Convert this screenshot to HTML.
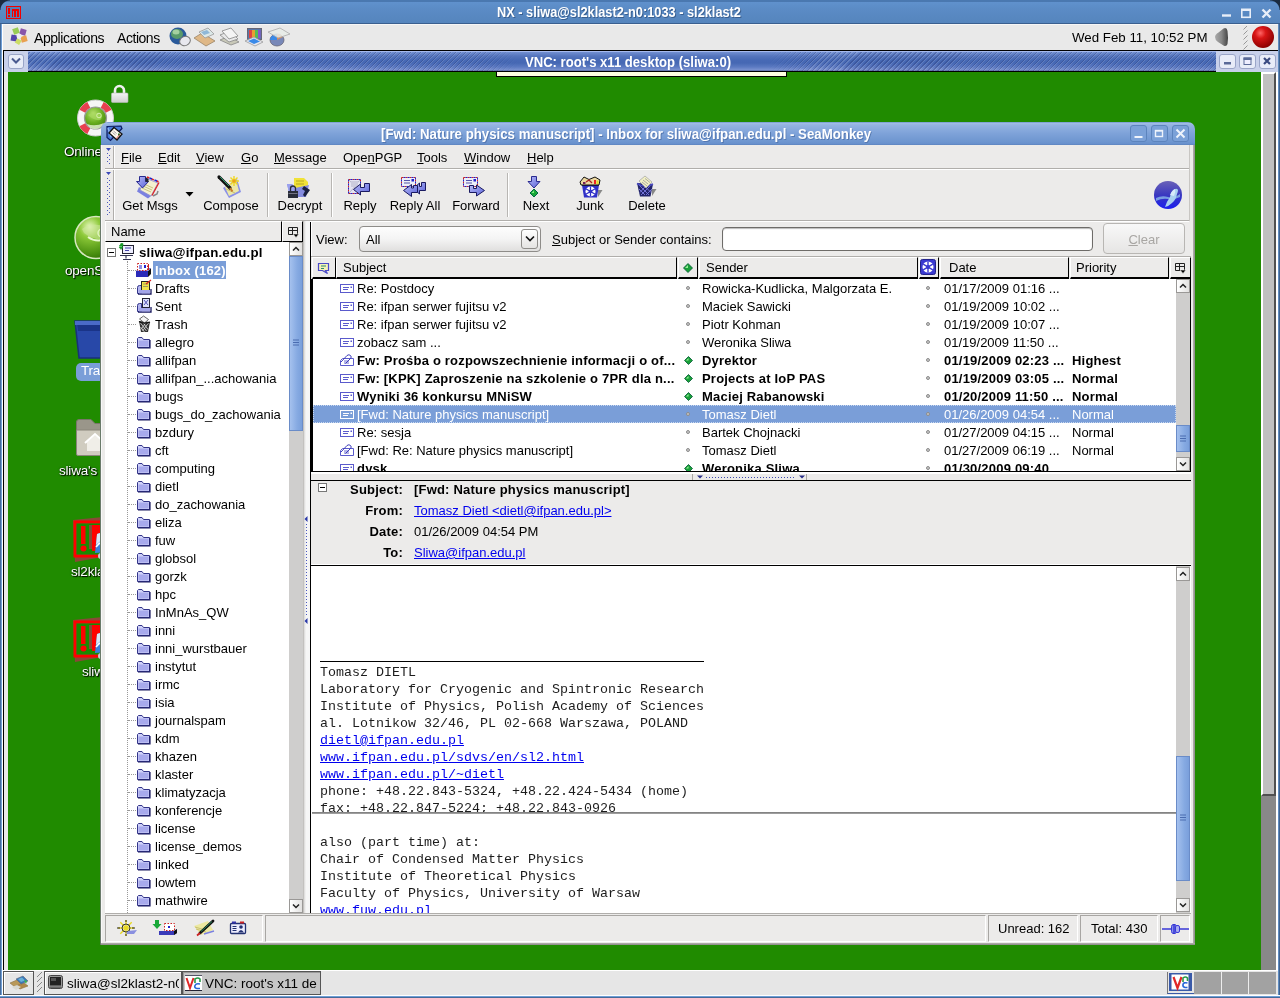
<!DOCTYPE html>
<html><head><meta charset="utf-8">
<style>
*{box-sizing:border-box;margin:0;padding:0}
html,body{width:1280px;height:998px;overflow:hidden;background:#208b00}
body{font-family:"Liberation Sans",sans-serif;font-size:13px;color:#000;position:relative;will-change:transform}
.a{position:absolute}
.t{position:absolute;white-space:pre;line-height:16px;height:16px}
u{text-decoration:underline}
/* outer NX frame */
#nxtitle{left:0;top:0;width:1280px;height:24px;background:linear-gradient(#6193cf,#5b8bc5 40%,#5585bd);border-bottom:1px solid #3a5f8f}
#panel{left:3px;top:24px;width:1275px;height:26px;background:#e9e9e9;border-top:1px solid #f6f6f6}
#vnctitle{left:28px;top:51px;width:1188px;height:20px;background:repeating-linear-gradient(135deg,rgba(0,0,0,0) 0,rgba(0,0,0,0) 2px,rgba(20,30,90,.24) 2px,rgba(20,30,90,.24) 2.800px,rgba(255,255,255,.14) 2.800px,rgba(255,255,255,.14) 3.540px),linear-gradient(#a6baee 0,#a6baee 1px,#6e8ccf 1.500px,#5575bd 5px,#4769b5 9px,#4668b4 12px,#5c7ac2 16px,#7a92d0 19px,#505a90 20px)}
#desk{left:8px;top:72px;width:1253px;height:898px;background:#208b00}
#bpanel{left:3px;top:970px;width:1275px;height:25px;background:#e6e6e6;border-top:1px solid #fff}
/* seamonkey */
#sm{left:101px;top:130px;width:1093px;height:815px;background:#ecebea}
.mn{top:150px}
.tbl{top:198px;text-align:center}
.row{position:absolute;left:0;height:18px;line-height:20px;white-space:pre}
.fold{position:absolute;left:155px;height:18px;line-height:20px;white-space:pre}
.b{font-weight:bold;letter-spacing:.2px}
.mono{font-family:"Liberation Mono",monospace;font-size:13.33px;line-height:19px;color:#1c1c1c;white-space:pre;position:absolute;left:320px;height:17px}
.lnk{color:#0000ee;text-decoration:underline}
</style></head><body>
<!-- ===== NX outer window ===== -->
<div class="a" id="nxtitle"></div>
<div class="a" style="left:0;top:0;width:1280px;height:2px;background:#4a78b0"></div>
<div class="a" style="left:0;top:0;width:10px;height:10px;background:radial-gradient(circle at 10px 10px,transparent 9px,#1a2a40 10px)"></div>
<div class="a" style="left:1270px;top:0;width:10px;height:10px;background:radial-gradient(circle at 0px 10px,transparent 9px,#1a2a40 10px)"></div>
<svg class="a" style="left:5px;top:5px" width="17" height="15" viewBox="0 0 17 15" shape-rendering="crispEdges"><rect x="1.500" y="1.500" width="14" height="12" fill="#4f7fb8" stroke="#f00000" stroke-width="1"/><rect x="3" y="3" width="2" height="6" fill="#f00000"/><rect x="3" y="10" width="2" height="2" fill="#f00000"/><path d="M7 4h7v8h-2v-6h-1v6h-2v-6h-1v6h-1z" fill="#f00000"/></svg>
<div class="t b" style="left:419px;width:400px;top:4px;text-align:center;color:#fff;font-size:14px;text-shadow:1px 1px 0 #3a5f8f;transform:scaleX(.9125);letter-spacing:0">NX - sliwa@sl2klast2-n0:1033 - sl2klast2</div>
<svg class="a" style="left:1218px;top:5px" width="58" height="16" viewBox="0 0 58 16"><g fill="none" stroke="#e8eef8" stroke-width="1.6"><path d="M4 10.5h9" stroke-width="2.4"/><rect x="23.8" y="4.3" width="8.4" height="8" /><path d="M24 5h8" stroke-width="2"/><path d="M44.5 4.5l8 8M52.5 4.5l-8 8" stroke-width="2.4"/></g></svg>
<div class="a" style="left:0;top:24px;width:3px;height:974px;background:linear-gradient(90deg,#2f4f7a,#6f9fd6 1.500px,#fff 2px,#fff)"></div>
<div class="a" style="left:1278px;top:24px;width:2px;height:974px;background:linear-gradient(90deg,#6f9fd6,#2f4f7a)"></div>
<div class="a" style="left:0;top:995px;width:1280px;height:3px;background:linear-gradient(#fff,#fff 1px,#6f9fd6 1.500px,#2f4f7a)"></div>
<div class="a" id="panel"></div>
<!-- gnome foot/menu icon -->
<svg class="a" style="left:9px;top:26px" width="22" height="22" viewBox="0 0 22 22"><g><rect x="4" y="2" width="6" height="6" fill="#9c5" transform="rotate(-20 7 5)"/><rect x="11" y="3" width="6" height="6" fill="#85a" transform="rotate(15 14 6)"/><rect x="2" y="9" width="6" height="6" fill="#54a" transform="rotate(10 5 12)"/><rect x="12" y="10" width="6" height="6" fill="#e9a050" transform="rotate(-15 15 13)"/><rect x="7" y="13" width="5" height="5" fill="#cd6" transform="rotate(30 9 15)"/><circle cx="10" cy="10" r="2.5" fill="#eee"/></g></svg>
<div class="t" style="left:34px;top:30px;font-size:14px;letter-spacing:-.45px">Applications</div>
<div class="t" style="left:117px;top:30px;font-size:14px;letter-spacing:-.45px">Actions</div>
<!-- launchers -->
<svg class="a" style="left:168px;top:26px" width="124" height="22" viewBox="0 0 124 22">
<ellipse cx="10" cy="10" rx="8.5" ry="8.5" fill="#2a5a9a"/><ellipse cx="9" cy="8" rx="6" ry="5" fill="#5a9a6a"/><ellipse cx="8" cy="6" rx="3.5" ry="2.5" fill="#a5d0a0"/><ellipse cx="17" cy="15" rx="5.5" ry="4.5" fill="#e8e8ee" stroke="#777" stroke-width="1" transform="rotate(-25 17 15)"/>
<path d="M26 12l8-5 13 8-9 5z" fill="#dfb887" stroke="#9a8568" stroke-width=".8"/><path d="M31 6l9-4 6 6-9 4z" fill="#dce8e8" stroke="#999" stroke-width=".8"/><path d="M33 6l6-2 3 3-6 2z" fill="#8fb8d8"/>
<path d="M52 14l9-4 10 6-8 3z" fill="#c8c8b8" stroke="#888" stroke-width=".8"/><path d="M52 9l10-4 8 8-9 3z" fill="#e8e8e8" stroke="#888" stroke-width=".8"/><path d="M54 5l9-3 7 8-9 3z" fill="#f4f4f4" stroke="#888" stroke-width=".8"/>
<rect x="79.500" y="2.500" width="14" height="11" fill="#5878a8" stroke="#667" /><rect x="81" y="4" width="3" height="8" fill="#d44"/><rect x="84" y="4" width="3" height="8" fill="#e8a030"/><rect x="87" y="4" width="3" height="8" fill="#5b5"/><rect x="90" y="4" width="2.500" height="8" fill="#85c"/><path d="M77 15l9-4 9 5-8 4z" fill="#e8e8f0" stroke="#999" stroke-width=".8"/><path d="M80 15l6-2.500 6 3-6 2.500z" fill="#3a8ae8"/>
<ellipse cx="109" cy="14" rx="7" ry="6" fill="#7888b8" stroke="#667" stroke-width=".8"/><path d="M109 14V8a7 6 0 0 1 6 3z" fill="#e08850"/><path d="M109 14h-7a7 6 0 0 1 7-6z" fill="#3a8ae8"/><path d="M100 6l12-4 10 6-12 4z" fill="#e8ece8" fill-opacity=".85" stroke="#aaa" stroke-width=".8"/>
</svg>
<div class="t" style="left:1072px;top:30px;font-size:13.3px">Wed Feb 11, 10:52 PM</div>
<svg class="a" style="left:1213px;top:26px" width="64" height="24" viewBox="0 0 64 24"><defs><radialGradient id="rb" cx=".38" cy=".32" r=".7"><stop offset="0" stop-color="#f66"/><stop offset=".35" stop-color="#d81515"/><stop offset="1" stop-color="#8a0000"/></radialGradient><linearGradient id="sp" x1="0" x2="1"><stop offset="0" stop-color="#aaa"/><stop offset=".5" stop-color="#888"/><stop offset="1" stop-color="#444"/></linearGradient></defs>
<path d="M2 11q0-2.500 3.500-4.500l5-4q3.500-1.500 4 2.500 1 7 0 13-1 3-4 1.500l-5.500-3.500q-3-2-3-5z" fill="url(#sp)"/>
<g stroke="#999" stroke-width="1"><path d="M30.500 3.500l4-4M30.500 8.500l4-4M30.500 13.500l4-4M30.500 18.500l4-4M30.500 23.500l4-4"/></g>
<circle cx="50" cy="11" r="11" fill="url(#rb)"/></svg>
<div class="a" style="left:3px;top:50px;width:1275px;height:1px;background:#000"></div>
<!-- VNC title -->
<div class="a" id="vnctitle"></div><div class="a" style="left:28px;top:51px;width:1188px;height:1px;background:#a6baee"></div><div class="a" style="left:478px;top:51px;width:330px;height:20px;background:linear-gradient(#a6baee 0,#a6baee 1px,#6e8ccf 1.500px,#5575bd 5px,#4769b5 9px,#4668b4 12px,#5c7ac2 16px,#7a92d0 19px,#505a90 20px);-webkit-mask-image:linear-gradient(90deg,transparent,#000 40px,#000 290px,transparent);mask-image:linear-gradient(90deg,transparent,#000 40px,#000 290px,transparent)"></div><div class="a" style="left:28px;top:71px;width:1188px;height:1px;background:#000"></div>
<div class="a" style="left:4px;top:51px;width:24px;height:21px;background:#c8d0ea"></div>
<div class="a" style="left:8px;top:54px;width:16px;height:15px;background:#e8ecf8;border:1px solid #9aa5c8;border-radius:3px"></div>
<svg class="a" style="left:11px;top:57px" width="10" height="8" viewBox="0 0 10 8"><path d="M1 1.500l4 4 4-4" fill="none" stroke="#4a5a90" stroke-width="2"/></svg>
<div class="a" style="left:1216px;top:51px;width:62px;height:21px;background:#c8d0ea"></div>
<div class="a" style="left:1219px;top:54px;width:17px;height:15px;background:#e8ecf8;border:1px solid #9aa5c8;border-radius:3px"></div>
<div class="a" style="left:1239px;top:54px;width:17px;height:15px;background:#e8ecf8;border:1px solid #9aa5c8;border-radius:3px"></div>
<div class="a" style="left:1259px;top:54px;width:17px;height:15px;background:#e8ecf8;border:1px solid #9aa5c8;border-radius:3px"></div>
<svg class="a" style="left:1219px;top:54px" width="58" height="15" viewBox="0 0 58 15"><rect x="5" y="8" width="7" height="2.500" fill="#5a6a98"/><rect x="25" y="4" width="7" height="6.500" fill="#eef" stroke="#5a6a98" stroke-width="1"/><rect x="24.500" y="3.500" width="8" height="2.500" fill="#5a6a98"/><path d="M45 4l6 6M51 4l-6 6" stroke="#3a4a80" stroke-width="2.200"/></svg>
<div class="t b" style="left:428px;width:400px;top:54px;text-align:center;color:#fff;font-size:14px;transform:scaleX(.935);letter-spacing:0">VNC: root's x11 desktop (sliwa:0)</div>
<div class="a" id="desk"></div>
<!-- desktop items (behind window) -->
<div class="a" style="left:3px;top:51px;width:1px;height:919px;background:#000"></div>
<div class="a" style="left:4px;top:72px;width:4px;height:898px;background:#e8e8e8"></div>
<div class="a" style="left:496px;top:72px;width:291px;height:5px;background:#ffffe1;border-bottom:1px solid #000;border-left:1px solid #000;border-right:1px solid #000"></div>
<div class="a" style="left:1261px;top:72px;width:15px;height:898px;background:#888"></div>
<div class="a" style="left:1261px;top:72px;width:15px;height:724px;background:#c0c0c0;border-left:2px solid #fff;border-top:2px solid #fff;border-right:2px solid #505050;border-bottom:2px solid #505050"></div>
<div class="a" style="left:1276px;top:72px;width:2px;height:923px;background:#fff"></div>
<svg class="a" style="left:74px;top:82px" width="58" height="62" viewBox="0 0 58 62"><defs><radialGradient id="gb" cx=".4" cy=".3" r=".8"><stop offset="0" stop-color="#b8e070"/><stop offset=".5" stop-color="#6ab020"/><stop offset="1" stop-color="#3a7a08"/></radialGradient><linearGradient id="lk" x1="0" y1="0" x2="0" y2="1"><stop offset="0" stop-color="#f4f4f4"/><stop offset="1" stop-color="#d0d0d0"/></linearGradient></defs>
<circle cx="21.500" cy="36" r="18" fill="#f6f6f6" stroke="#ccc" stroke-width="1"/>
<g fill="none" stroke="#e84050" stroke-width="6.500"><path d="M8.36 29.3A14.75 14.75 0 0 1 14.8 22.86"/><path d="M28.2 22.86A14.75 14.75 0 0 1 34.64 29.3"/><path d="M14.8 49.14A14.75 14.75 0 0 1 8.36 42.7"/></g>
<circle cx="21.500" cy="36" r="11" fill="url(#gb)" stroke="#999" stroke-width="1.200"/><path d="M14 33q6-5 13 0 2 3-1 5-6 1-12-5z" fill="#a8d860" fill-opacity=".7"/><circle cx="25" cy="33.500" r="2.300" fill="none" stroke="#d8f0b0" stroke-width="1"/><path d="M13 42q8 3 17-1-3 6-9 6t-8-5z" fill="#e8f4d8" fill-opacity=".8"/>
<path d="M41 12v-3.500a4.500 4.500 0 0 1 9 0V12" fill="none" stroke="#f0f0f0" stroke-width="2.600"/><rect x="37.500" y="11" width="16.500" height="9.500" rx="1" fill="url(#lk)" stroke="#bbb" stroke-width=".6"/></svg>
<div style="position:absolute;white-space:pre;color:#fff;font-size:13.500px;letter-spacing:-.2px;line-height:18px;height:18px;text-shadow:1px 1px 1px #000,0 0 2px #0a3a00;left:64px;top:143px">Online</div>
<svg class="a" style="left:74px;top:215px" width="46" height="46" viewBox="0 0 46 46"><defs><radialGradient id="gb2" cx=".35" cy=".25" r=".85"><stop offset="0" stop-color="#e8f8c0"/><stop offset=".3" stop-color="#8cc838"/><stop offset=".75" stop-color="#4a9010"/><stop offset="1" stop-color="#2a6a00"/></radialGradient></defs><circle cx="22" cy="22.500" r="21" fill="url(#gb2)" stroke="#d8e8c0" stroke-width="1.500"/><path d="M8 14q10-8 24-2 6 6 0 12-12 2-22-6z" fill="#cfe8a0" fill-opacity=".55"/><path d="M14 22q8 6 18 2" fill="none" stroke="#e8f8d0" stroke-width="2"/><circle cx="28" cy="18" r="4" fill="none" stroke="#e0f4c0" stroke-width="1.500"/></svg>
<div style="position:absolute;white-space:pre;color:#fff;font-size:13.500px;letter-spacing:-.2px;line-height:18px;height:18px;text-shadow:1px 1px 1px #000,0 0 2px #0a3a00;left:65px;top:262px">openSUSE</div>
<svg class="a" style="left:74px;top:318px" width="50" height="42" viewBox="0 0 50 42"><path d="M1 3h46l-4 37h-38z" fill="#2848a8" stroke="#183078" stroke-width="1.500"/><path d="M3 5h42l-1 8h-40z" fill="#1a3488"/><path d="M1 3h46v4h-46z" fill="#4a6ac8"/></svg>
<div class="a" style="left:76px;top:363px;width:50px;height:18px;border-radius:5px;background:#7a9ed8"></div>
<div style="position:absolute;white-space:pre;color:#fff;font-size:13.500px;letter-spacing:-.2px;line-height:18px;height:18px;text-shadow:1px 1px 1px #000,0 0 2px #0a3a00;left:81px;top:362px;text-shadow:none">Trash</div>
<svg class="a" style="left:75px;top:418px" width="50" height="40" viewBox="0 0 50 40"><path d="M1.500 4q0-2.500 2.500-2.500h12l4 4h27v30h-45.500z" fill="#9a968a" stroke="#7a766a" stroke-width="1"/><path d="M1.500 12h46v24q0 1.500-1.500 1.500h-43q-1.500 0-1.500-1.500z" fill="#d0ccc0" stroke="#8a867a" stroke-width="1"/><path d="M12 24l8-7 8 7v9h-16z" fill="#f0eee8"/><path d="M10 25l10-9 10 9" fill="none" stroke="#fff" stroke-width="2"/></svg>
<div style="position:absolute;white-space:pre;color:#fff;font-size:13.500px;letter-spacing:-.2px;line-height:18px;height:18px;text-shadow:1px 1px 1px #000,0 0 2px #0a3a00;left:59px;top:462px">sliwa's</div>
<svg class="a" style="left:72px;top:517px" width="50" height="46" viewBox="0 0 50 46"><path d="M1 3l30-3v40l-28 5z" fill="#8a4838"/><path d="M3 5h40v34h-40z" fill="none" stroke="#f00" stroke-width="3"/><rect x="4.500" y="6.500" width="38" height="31" fill="#1a8a00"/><rect x="9" y="9" width="4.500" height="18" fill="#f00"/><circle cx="11.500" cy="31.500" r="3" fill="#f00"/><rect x="17" y="8" width="4" height="24" fill="#8a4838"/><rect x="20" y="8" width="22" height="26" fill="#f00"/><path d="M25 17l6-2 6 20-14 1z" fill="#3a80d8"/><path d="M25 17l6-2 2 5-9 8z" fill="#d8e8f8"/><path d="M24 30q6-8 11-4" fill="none" stroke="#fff" stroke-width="1.500"/><circle cx="29" cy="39" r="3" fill="#ccc"/></svg>
<div style="position:absolute;white-space:pre;color:#fff;font-size:13.500px;letter-spacing:-.2px;line-height:18px;height:18px;text-shadow:1px 1px 1px #000,0 0 2px #0a3a00;left:71px;top:563px">sl2klast2</div>
<svg class="a" style="left:72px;top:617px" width="50" height="46" viewBox="0 0 50 46"><path d="M1 3l30-3v40l-28 5z" fill="#8a4838"/><path d="M3 5h40v34h-40z" fill="none" stroke="#f00" stroke-width="3"/><rect x="4.500" y="6.500" width="38" height="31" fill="#1a8a00"/><rect x="9" y="9" width="4.500" height="18" fill="#f00"/><circle cx="11.500" cy="31.500" r="3" fill="#f00"/><rect x="17" y="8" width="4" height="24" fill="#8a4838"/><rect x="20" y="8" width="22" height="26" fill="#f00"/><path d="M25 17l6-2 6 20-14 1z" fill="#3a80d8"/><path d="M25 17l6-2 2 5-9 8z" fill="#d8e8f8"/><path d="M24 30q6-8 11-4" fill="none" stroke="#fff" stroke-width="1.500"/><circle cx="29" cy="39" r="3" fill="#ccc"/></svg>
<div style="position:absolute;white-space:pre;color:#fff;font-size:13.500px;letter-spacing:-.2px;line-height:18px;height:18px;text-shadow:1px 1px 1px #000,0 0 2px #0a3a00;left:82px;top:663px">sliwa</div>
<div class="a" id="bpanel"></div>
<!-- bottom panel -->
<div class="a" style="left:3px;top:971px;width:31px;height:24px;border:1px solid #555;background:#e6e6e6;box-shadow:inset 1px 1px 0 #fff"></div>
<svg class="a" style="left:9px;top:975px" width="20" height="16" viewBox="0 0 20 16"><path d="M1 8l7-3 5 3-7 4z" fill="#b89858" stroke="#8a7040" stroke-width=".6"/><path d="M7 11l8-3 4 3-8 3z" fill="#b08848" stroke="#8a7040" stroke-width=".6"/><path d="M3 12l5-2 4 2-5 3z" fill="#d8d8d0"/><path d="M7 4l7-3 5 5-7 3z" fill="#3a78b8" stroke="#667" stroke-width=".6"/><path d="M9 4l4-1.500 3 3-4 1.500z" fill="#6ab0d8"/><path d="M15 5l3 1-1 3z" fill="#3ab848"/></svg>
<svg class="a" style="left:36px;top:972px" width="8" height="22" viewBox="0 0 8 22"><g stroke="#888" stroke-width="1"><path d="M1 5l5-5M1 10l5-5M1 15l5-5M1 20l5-5"/></g></svg>
<div class="a" style="left:44px;top:971px;width:138px;height:24px;border:1px solid #555;background:#e6e6e6;box-shadow:inset 1px 1px 0 #fff"></div>
<svg class="a" style="left:48px;top:975px" width="16" height="15" viewBox="0 0 16 15"><rect x=".5" y=".5" width="14" height="13" rx="2" fill="#999" stroke="#444"/><rect x="2" y="2" width="11" height="8.500" fill="#222"/><rect x="3" y="3" width="5" height="3" fill="#555"/><rect x="2" y="11.500" width="11" height="1.500" fill="#666"/></svg>
<div class="a" style="left:67px;top:974px;width:112px;height:18px;overflow:hidden"><div class="t" style="left:0;top:2px;font-size:13.500px">sliwa@sl2klast2-n0</div></div>
<div class="a" style="left:182px;top:971px;width:139px;height:24px;border:1px solid #555;background:#c6c6c6;box-shadow:inset 1px 1px 0 #999"></div>
<svg class="a" style="left:185px;top:975px" width="17" height="16" viewBox="0 0 17 16"><rect x="0" y="0" width="17" height="16" fill="#fff"/><path d="M0 15.500h17" stroke="#223" stroke-width="1"/><path d="M0 .500h17" stroke="#556" stroke-width="1"/><path d="M1.500 3l3.500 10 3.500-10" fill="none" stroke="#e02828" stroke-width="2"/><path d="M10 8v-4q3-2 5 0v3" fill="none" stroke="#2a9a48" stroke-width="1.600"/><path d="M15 9q-4-1-5 1.500t2 3h3" fill="none" stroke="#2868d8" stroke-width="1.600"/></svg>
<div class="a" style="left:205px;top:974px;width:114px;height:18px;overflow:hidden"><div class="t" style="left:0;top:2px;font-size:13.500px">VNC: root's x11 de</div></div>
<div class="a" style="left:1194px;top:972px;width:82px;height:22px;background:#a2a2a2"></div>
<div class="a" style="left:1221px;top:972px;width:1px;height:22px;background:#eee"></div><div class="a" style="left:1248px;top:972px;width:1px;height:22px;background:#eee"></div>
<div class="a" style="left:1167px;top:972px;width:27px;height:22px;background:#e6e6e6;border-left:1px solid #777;border-bottom:1px solid #3a5aa8"></div>
<svg class="a" style="left:1169px;top:973px" width="24" height="19" viewBox="0 0 24 19"><rect x="0" y="0" width="23" height="18" fill="#3a5aa8"/><rect x="2.500" y="1.500" width="17" height="15" fill="#fff"/><path d="M4.500 4l4 11 4-11" fill="none" stroke="#e02828" stroke-width="2.200"/><path d="M14 9v-4q2.500-2 4.500 0v3" fill="none" stroke="#2a9a48" stroke-width="1.600"/><path d="M18.500 10q-4-1-4.500 1.500t2 3h2.500" fill="none" stroke="#2868d8" stroke-width="1.600"/></svg>
<!-- ===== SeaMonkey ===== -->
<div class="a" id="sm"></div>
<div class="a" style="left:101px;top:122px;width:1094px;height:23px;border-radius:7px 7px 0 0;background:linear-gradient(#5f88c5 0,#a3bee6 1px,#94b3e2 3px,#7fa3d9 11px,#6d95cf 20px,#6790cc 22px,#5a80bb 23px)"></div>
<div class="t b" style="left:276px;width:700px;top:126px;text-align:center;color:#fff;font-size:14px;text-shadow:1px 1px 0 #5578b0;transform:scaleX(.9465);letter-spacing:0">[Fwd: Nature physics manuscript] - Inbox for sliwa@ifpan.edu.pl - SeaMonkey</div>
<!-- title icon -->
<svg class="a" style="left:106px;top:125px" width="17" height="17" viewBox="0 0 17 17"><path d="M1 1.500l14-.5 1 2.500-11.500 12-3.500-3z" fill="#4a7ad8" stroke="#0a1a60" stroke-width="1.200"/><path d="M2 3l3 9" stroke="#8ab0f0" stroke-width="1.500"/><path d="M8 2.500l8 6.500-5 6-8-7z" fill="#fff8ee" stroke="#111" stroke-width="1.300"/><path d="M7.500 6l3 2.500M6.500 7.500l3 2.500" stroke="#999" stroke-width=".9"/><rect x="12" y="8.500" width="2" height="2" fill="#1a7a2a"/><path d="M10 14l4-5" stroke="#c33" stroke-width=".8"/></svg>
<!-- window buttons -->
<div class="a" style="left:1130px;top:125px;width:17px;height:17px;border:1px solid #5c84bd;border-radius:3px;background:#7ba1d8"></div>
<div class="a" style="left:1151px;top:125px;width:17px;height:17px;border:1px solid #5c84bd;border-radius:3px;background:#7ba1d8"></div>
<div class="a" style="left:1172px;top:125px;width:17px;height:17px;border:1px solid #5c84bd;border-radius:3px;background:#7ba1d8"></div>
<svg class="a" style="left:1130px;top:125px" width="60" height="17" viewBox="0 0 60 17"><g fill="none" stroke="#eef3fb"><path d="M4.500 12h8" stroke-width="2"/><rect x="25.500" y="5.500" width="7" height="6" stroke-width="1.400"/><path d="M25.500 5.800h7" stroke-width="1.600"/><path d="M46.500 4.500l8 8M54.500 4.500l-8 8" stroke-width="2"/></g></svg>
<!-- frame borders -->
<div class="a" style="left:101px;top:145px;width:1px;height:800px;background:#f8f8f8"></div>
<div class="a" style="left:1193px;top:145px;width:2px;height:800px;background:linear-gradient(90deg,#b5b3b0,#8a8886)"></div>
<div class="a" style="left:101px;top:943px;width:1094px;height:2px;background:linear-gradient(#b5b3b0,#8a8886)"></div>
<div class="a" style="left:1189px;top:145px;width:1px;height:76px;background:#c8c6c3"></div><div class="a" style="left:100px;top:145px;width:1px;height:800px;background:#6a7a6a"></div>
<!-- menubar -->
<div class="a" style="left:105px;top:145px;width:1084px;height:24px;border-bottom:1px solid #b0aeab"></div>
<div class="a" style="left:105px;top:169px;width:1084px;height:1px;background:#fff"></div>
<div class="a" style="left:113px;top:146px;width:1px;height:22px;background:#b0aeab"></div>
<div class="a" style="left:113px;top:170px;width:1px;height:50px;background:#b0aeab"></div>
<div class="a" style="left:114px;top:146px;width:1px;height:22px;background:#fff"></div>
<div class="a" style="left:114px;top:170px;width:1px;height:50px;background:#fff"></div>
<svg class="a" style="left:104px;top:145px" width="9" height="74" viewBox="0 0 9 74"><path d="M2 3h5l-2.500 3zM2 27h5l-2.500 3z" fill="#3a48b8"/><g fill="#4a58c0"><path d="M3 8h1v1h-1zM5 10h1v1h-1zM3 12h1v1h-1zM5 14h1v1h-1zM3 16h1v1h-1zM5 18h1v1h-1z"/><path d="M3 33h1v1h-1zM5 35h1v1h-1zM3 37h1v1h-1zM5 39h1v1h-1zM3 41h1v1h-1zM5 43h1v1h-1zM3 45h1v1h-1zM5 47h1v1h-1zM3 49h1v1h-1zM5 51h1v1h-1zM3 53h1v1h-1zM5 55h1v1h-1zM3 57h1v1h-1zM5 59h1v1h-1zM3 61h1v1h-1zM5 63h1v1h-1zM3 65h1v1h-1zM5 67h1v1h-1zM3 69h1v1h-1z"/></g></svg>
<div class="t mn" style="left:121px"><u>F</u>ile</div>
<div class="t mn" style="left:158px"><u>E</u>dit</div>
<div class="t mn" style="left:196px"><u>V</u>iew</div>
<div class="t mn" style="left:241px"><u>G</u>o</div>
<div class="t mn" style="left:274px"><u>M</u>essage</div>
<div class="t mn" style="left:343px">Ope<u>n</u>PGP</div>
<div class="t mn" style="left:417px"><u>T</u>ools</div>
<div class="t mn" style="left:464px"><u>W</u>indow</div>
<div class="t mn" style="left:527px"><u>H</u>elp</div>
<!-- toolbar -->
<div class="a" style="left:105px;top:220px;width:1084px;height:1px;background:#b0aeab"></div>
<div class="a" style="left:105px;top:221px;width:1084px;height:1px;background:#fff"></div>
<div class="a" style="left:267px;top:173px;width:1px;height:44px;background:#b8b6b3"></div><div class="a" style="left:268px;top:173px;width:1px;height:44px;background:#fff"></div>
<div class="a" style="left:331px;top:173px;width:1px;height:44px;background:#b8b6b3"></div><div class="a" style="left:332px;top:173px;width:1px;height:44px;background:#fff"></div>
<div class="a" style="left:507px;top:173px;width:1px;height:44px;background:#b8b6b3"></div><div class="a" style="left:508px;top:173px;width:1px;height:44px;background:#fff"></div>
<div class="t tbl" style="left:109px;width:82px">Get Msgs</div>
<div class="t tbl" style="left:190px;width:82px">Compose</div>
<div class="t tbl" style="left:259px;width:82px">Decrypt</div>
<div class="t tbl" style="left:319px;width:82px">Reply</div>
<div class="t tbl" style="left:374px;width:82px">Reply All</div>
<div class="t tbl" style="left:435px;width:82px">Forward</div>
<div class="t tbl" style="left:495px;width:82px">Next</div>
<div class="t tbl" style="left:549px;width:82px">Junk</div>
<div class="t tbl" style="left:606px;width:82px">Delete</div>
<svg class="a" style="left:185px;top:192px" width="9" height="5" viewBox="0 0 9 5"><path d="M0.500 0h8l-4 4.500z" fill="#000"/></svg>
<svg class="a" style="left:120px;top:172px" width="560" height="28" viewBox="0 0 560 28">
<defs><linearGradient id="lav" x1="0" y1="0" x2="1" y2="1"><stop offset="0" stop-color="#b8bcf8"/><stop offset="1" stop-color="#5a62d8"/></linearGradient></defs>
<!-- get msgs -->
<path d="M19 15l12 9-3 2.500-11-7z" fill="#7a80e0"/><path d="M25 6l13 5-7 13-11-6z" fill="#f4f0d0" stroke="#8a8ad0" stroke-width=".8"/><path d="M23 14l9 4M22 16l9 4M24 12l9 4" stroke="#c8c480" stroke-width="1"/><path d="M27 5l12 5" stroke="#e02020" stroke-width="1.600" stroke-dasharray="2.500 2.500"/><path d="M29.500 6l2.500 1M34.500 8l2.500 1" stroke="#22c" stroke-width="1.600"/><path d="M39 10.500l-7 13" stroke="#d22" stroke-width="1.300"/><path d="M33 24l4-2 1-3" fill="none" stroke="#888" stroke-width="1.500"/><path d="M19.500 4.500h6v5h3l-6 6.500-6-6.500h3z" fill="url(#lav)" stroke="#2a2a90" stroke-width="1"/><path d="M25.500 5l3 2v3h-3z" fill="#223"/>
<!-- compose -->
<path d="M103 16l14-9 4 13-12 6z" fill="#8a90e8"/><path d="M105 15l11-7 3 11-10 5z" fill="#ece8a8"/><path d="M106 17l9 4" stroke="#c8c070" stroke-width="1"/><path d="M114 4v10M109 9h10M110.500 5.500l7 7M117.500 5.500l-7 7" stroke="#f0d820" stroke-width="1.400"/><circle cx="114" cy="9" r="1.800" fill="#e8a020"/><path d="M99 5l11 11" stroke="#111" stroke-width="3.200" stroke-linecap="round"/><path d="M100 5l9 9" stroke="#2a9a6a" stroke-width="1"/><path d="M110 16l2.500 3.500" stroke="#c87828" stroke-width="2"/>
<!-- decrypt -->
<path d="M174 6h10l4 4v8h-14z" fill="#f0e238"/><path d="M176 9h8M176 12h8" stroke="#b8a820" stroke-width="1"/><path d="M167 12h5l3 4 14-3-3 12h-16z" fill="#858ce0"/><path d="M167 12h5l3 4-2 9h-3z" fill="#9aa0ee"/><rect x="168" y="19" width="10" height="7" fill="#2a2e3a"/><path d="M170.500 19v-2.500a2.500 2.500 0 0 1 5 0V19" fill="none" stroke="#2a2e3a" stroke-width="1.300"/><path d="M168.500 21.500h9" stroke="#889" stroke-width=".8"/><path d="M184 14l6 4-5 7-2-2 2-4-3-2z" fill="#1a2040"/>
<!-- reply -->
<rect x="228.500" y="7.500" width="12" height="14" fill="#e4e4f2" stroke="#c22" stroke-width="1" stroke-dasharray="2 2"/><rect x="228.500" y="7.500" width="12" height="14" fill="none" stroke="#22c" stroke-width="1" stroke-dasharray="2 2" stroke-dashoffset="2"/><path d="M229 21l5.500-6 5.500 6M229 8l5.500 6 5.500-6" fill="none" stroke="#aab" stroke-width=".8"/><rect x="231" y="9" width="7" height="6" fill="#ccd"/><path d="M249.500 11.500v8h-9v3.500l-7-5.500 7-5.500v3.500h4v-4z" fill="url(#lav)" stroke="#1a1a60" stroke-width="1"/>
<!-- reply all -->
<rect x="281.500" y="5.500" width="14" height="9" fill="#eceef8" stroke="#c22" stroke-width="1" stroke-dasharray="2 2"/><rect x="281.500" y="5.500" width="14" height="9" fill="none" stroke="#22c" stroke-width="1" stroke-dasharray="2 2" stroke-dashoffset="2"/><path d="M284 8.500h6M284 11h6" stroke="#55a" stroke-width="1"/><rect x="291.500" y="7" width="2.500" height="2.500" fill="#22c"/><path d="M305.500 10.500v8h-6v3.500l-6-5.500 6-5.500v3.500h2v-4z" fill="url(#lav)" stroke="#1a1a60" stroke-width="1"/><path d="M297.500 13.500v7h-6v4l-8-6 8-6v3.500h2v-2.500z" fill="url(#lav)" stroke="#1a1a60" stroke-width="1"/>
<!-- forward -->
<rect x="343.500" y="5.500" width="14" height="9" fill="#eceef8" stroke="#c22" stroke-width="1" stroke-dasharray="2 2"/><rect x="343.500" y="5.500" width="14" height="9" fill="none" stroke="#22c" stroke-width="1" stroke-dasharray="2 2" stroke-dashoffset="2"/><path d="M346 8.500h6M346 11h6" stroke="#55a" stroke-width="1"/><rect x="353.500" y="7" width="2.500" height="2.500" fill="#22c"/><path d="M349.500 13.500v7h7v3.500l8-5.500-8-5.500v3.500h-3v-3z" fill="url(#lav)" stroke="#1a1a60" stroke-width="1"/>
<!-- next -->
<path d="M411.500 4.500h5v5h3.500l-6 6.500-6-6.500h3.500z" fill="url(#lav)" stroke="#2a2a90" stroke-width="1"/><path d="M414 17l4 4-4 4-4-4z" fill="#18a838" stroke="#064" stroke-width="1"/><path d="M414 18.500l-2.500 2.500h2.500z" fill="#8e8"/>
<!-- junk -->
<path d="M478 18h4.500l-4.500 7z" fill="#888"/><path d="M462 13h17l-2 12.500h-13z" fill="#3030c8"/><path d="M462 13h17" stroke="#113" stroke-width="1.200"/><circle cx="470.500" cy="19.500" r="5" fill="#fff"/><circle cx="470.500" cy="19.500" r="1.800" fill="#3030c8"/><path d="M470.500 14.500v10M466.200 17l8.600 5M466.200 22l8.600-5" stroke="#3030c8" stroke-width="1.300"/><path d="M460 10l4-5 5 2.500 6-2.500 5 3-1 5h-18z" fill="#ecd8a0" stroke="#111" stroke-width="1"/><path d="M466 10l3-2 3 3" fill="none" stroke="#a22" stroke-width="1.300"/><rect x="474" y="8" width="2" height="4" fill="#e22"/><rect x="476.500" y="8.500" width="2" height="3.500" fill="#dd2"/><rect x="463" y="10" width="2.500" height="2" fill="#725"/>
<!-- delete -->
<path d="M532 17h4.500l-4.500 7z" fill="#888"/><path d="M517 11l16 1-2.500 12.500h-10.500z" fill="#22246a"/><path d="M519 13l10 10M523 12.500l8 8M519 17l6 6M531 13l-10 10M527 12.500l-7 8M532 17l-6 6" stroke="#7a7ae0" stroke-width=".9"/><path d="M517 11.500q8 5 16 .5" fill="none" stroke="#4a4ac0" stroke-width="1.500"/><path d="M519 9l6-5 7 6-6 6z" fill="#f2f0c4" stroke="#aaa" stroke-width=".8"/><path d="M523 8l5 4M522 10l5 4M525 6.500l5 4" stroke="#999" stroke-width=".8"/>
</svg>
<svg class="a" style="left:1153px;top:180px" width="30" height="30" viewBox="0 0 30 30"><defs><linearGradient id="thr" x1="0" y1="0" x2="0" y2="1"><stop offset="0" stop-color="#6a62b8"/><stop offset=".5" stop-color="#3a38c0"/><stop offset="1" stop-color="#1a1ef0"/></linearGradient></defs><circle cx="15" cy="15" r="14" fill="url(#thr)"/><path d="M3 18q6-3 12-1t12-3v3q-6 3-12 2t-12 2z" fill="#8ab8e8" fill-opacity=".8"/><path d="M12 27q2-6 5-10 1-6 5-8 2-1 3 1 0 2-1 4-1 6-5 9-3 3-7 4z" fill="#a8d0f0"/><path d="M17 15q2-5 5-6 1 3-1 7z" fill="#d8ecfa"/></svg>

<!-- folder pane -->
<div class="a" style="left:105px;top:242px;width:184px;height:671px;background:#fff"></div>
<div class="a" style="left:105px;top:221px;width:177px;height:21px;background:#ecebea;border-top:1px solid #fff;border-left:1px solid #fff;border-right:1px solid #000;border-bottom:1px solid #000"></div>
<div class="a" style="left:282px;top:221px;width:21px;height:21px;background:#ecebea;border-top:1px solid #fff;border-left:1px solid #fff;border-right:1px solid #000;border-bottom:1px solid #000"></div>
<svg class="a" style="left:287px;top:226px" width="12" height="12" viewBox="0 0 12 12"><path d="M1.500 1.500h9v7h-9zM1.500 4.500h9M5.500 1.500v7" fill="none" stroke="#222" stroke-width="1"/><path d="M6 8h6l-3 3.500z" fill="#000" stroke="#ecebea" stroke-width=".6"/></svg>
<div class="t" style="left:111px;top:224px">Name</div>
<div class="a" style="left:289px;top:242px;width:14px;height:671px;background:#cfcecd"></div>
<div class="a" style="left:289px;top:242px;width:14px;height:14px;background:linear-gradient(90deg,#fff,#e2e1e0);border:1px solid #9a9896"></div>
<svg class="a" style="left:292px;top:246px" width="8" height="6" viewBox="0 0 8 6"><path d="M1 4.500l3-3 3 3" fill="none" stroke="#222" stroke-width="1.500"/></svg>
<div class="a" style="left:289px;top:899px;width:14px;height:14px;background:linear-gradient(90deg,#fff,#e2e1e0);border:1px solid #9a9896"></div>
<svg class="a" style="left:292px;top:903px" width="8" height="6" viewBox="0 0 8 6"><path d="M1 1.500l3 3 3-3" fill="none" stroke="#222" stroke-width="1.500"/></svg>
<div class="a" style="left:289px;top:256px;width:14px;height:175px;background:linear-gradient(90deg,#a5c1ee,#86aae2 60%,#7a9fdb);border:1px solid #6a8cc8"></div>
<svg class="a" style="left:292px;top:339px" width="8" height="7" viewBox="0 0 8 7"><path d="M1 1h6M1 3.500h6M1 6h6" stroke="#4a6cb0" stroke-width="1"/></svg>
<div class="a" style="left:127px;top:261px;width:0;height:652px;border-left:1px dotted #999"></div>
<div class="a" style="left:107px;top:248px;width:9px;height:9px;border:1px solid #777;background:#fff"></div><div class="a" style="left:109px;top:252px;width:5px;height:1px;background:#000"></div>
<svg class="a" style="left:118px;top:243px" width="17" height="18" viewBox="0 0 17 18"><rect x="4.500" y="2.500" width="11" height="8" fill="#eef" stroke="#223" stroke-width="1"/><path d="M7 5h6M7 7.500h4" stroke="#44a" stroke-width="1"/><path d="M2 12.500h13M8 12.500v3M5 16.500h8" stroke="#335" stroke-width="1.200" fill="none"/><path d="M1 3h4v-2.500l-2 -0M3 0v5M1 4l2 2.500 2-2.500z" fill="#1a9a2a" stroke="#1a9a2a" stroke-width=".6"/></svg>
<div class="fold b" style="left:139px;top:243px;font-size:13.3px">sliwa@ifpan.edu.pl</div>
<div class="a" style="left:153px;top:261px;width:73px;height:18px;background:#7a9ed8"></div>
<div class="fold b" style="top:261px;color:#fff">Inbox (162)</div>
<svg class="a" style="left:134px;top:261px" width="18" height="18" viewBox="0 0 18 18"><path d="M2 10h12v6h-12z" fill="#2a2ab8"/><path d="M14 10l3-3v6l-3 3z" fill="#111"/><path d="M2 10l3-3h12l-3 3z" fill="#7a7ae0"/><rect x="3.500" y="2.500" width="10" height="7" fill="#fff" stroke="#c22" stroke-width="1" stroke-dasharray="1.500 1.500"/><path d="M5 5h3M5 7h3" stroke="#22c" stroke-width="1"/><rect x="10" y="4" width="2" height="3" fill="#22c"/><path d="M14.500 3v6" stroke="#c22" stroke-width="1"/></svg>
<div class="a" style="left:128px;top:270px;width:8px;height:0;border-top:1px dotted #999"></div>
<div class="a" style="left:128px;top:288px;width:8px;height:0;border-top:1px dotted #999"></div>
<div class="a" style="left:128px;top:306px;width:8px;height:0;border-top:1px dotted #999"></div>
<div class="a" style="left:128px;top:324px;width:8px;height:0;border-top:1px dotted #999"></div>
<div class="a" style="left:128px;top:342px;width:8px;height:0;border-top:1px dotted #999"></div>
<div class="a" style="left:128px;top:360px;width:8px;height:0;border-top:1px dotted #999"></div>
<div class="a" style="left:128px;top:378px;width:8px;height:0;border-top:1px dotted #999"></div>
<div class="a" style="left:128px;top:396px;width:8px;height:0;border-top:1px dotted #999"></div>
<div class="a" style="left:128px;top:414px;width:8px;height:0;border-top:1px dotted #999"></div>
<div class="a" style="left:128px;top:432px;width:8px;height:0;border-top:1px dotted #999"></div>
<div class="a" style="left:128px;top:450px;width:8px;height:0;border-top:1px dotted #999"></div>
<div class="a" style="left:128px;top:468px;width:8px;height:0;border-top:1px dotted #999"></div>
<div class="a" style="left:128px;top:486px;width:8px;height:0;border-top:1px dotted #999"></div>
<div class="a" style="left:128px;top:504px;width:8px;height:0;border-top:1px dotted #999"></div>
<div class="a" style="left:128px;top:522px;width:8px;height:0;border-top:1px dotted #999"></div>
<div class="a" style="left:128px;top:540px;width:8px;height:0;border-top:1px dotted #999"></div>
<div class="a" style="left:128px;top:558px;width:8px;height:0;border-top:1px dotted #999"></div>
<div class="a" style="left:128px;top:576px;width:8px;height:0;border-top:1px dotted #999"></div>
<div class="a" style="left:128px;top:594px;width:8px;height:0;border-top:1px dotted #999"></div>
<div class="a" style="left:128px;top:612px;width:8px;height:0;border-top:1px dotted #999"></div>
<div class="a" style="left:128px;top:630px;width:8px;height:0;border-top:1px dotted #999"></div>
<div class="a" style="left:128px;top:648px;width:8px;height:0;border-top:1px dotted #999"></div>
<div class="a" style="left:128px;top:666px;width:8px;height:0;border-top:1px dotted #999"></div>
<div class="a" style="left:128px;top:684px;width:8px;height:0;border-top:1px dotted #999"></div>
<div class="a" style="left:128px;top:702px;width:8px;height:0;border-top:1px dotted #999"></div>
<div class="a" style="left:128px;top:720px;width:8px;height:0;border-top:1px dotted #999"></div>
<div class="a" style="left:128px;top:738px;width:8px;height:0;border-top:1px dotted #999"></div>
<div class="a" style="left:128px;top:756px;width:8px;height:0;border-top:1px dotted #999"></div>
<div class="a" style="left:128px;top:774px;width:8px;height:0;border-top:1px dotted #999"></div>
<div class="a" style="left:128px;top:792px;width:8px;height:0;border-top:1px dotted #999"></div>
<div class="a" style="left:128px;top:810px;width:8px;height:0;border-top:1px dotted #999"></div>
<div class="a" style="left:128px;top:828px;width:8px;height:0;border-top:1px dotted #999"></div>
<div class="a" style="left:128px;top:846px;width:8px;height:0;border-top:1px dotted #999"></div>
<div class="a" style="left:128px;top:864px;width:8px;height:0;border-top:1px dotted #999"></div>
<div class="a" style="left:128px;top:882px;width:8px;height:0;border-top:1px dotted #999"></div>
<div class="a" style="left:128px;top:900px;width:8px;height:0;border-top:1px dotted #999"></div>
<svg class="a" style="left:136px;top:279px" width="17" height="17" viewBox="0 0 17 17"><path d="M1.500 8.500q0-2 2-2h2v8h-4z" fill="#b4b6ee" stroke="#33358a"/><path d="M2 15h13v-5" fill="none" stroke="#1a1a60" stroke-width="1.300"/><rect x="5.500" y="2.500" width="8" height="9" fill="#f2e24a" stroke="#222" stroke-width="1"/><path d="M7 5h5M7 7.500h5" stroke="#886" stroke-width=".8"/><path d="M10 5l5-4" stroke="#d22" stroke-width="1.300"/><path d="M3 11h11v3.500h-11z" fill="#a2a4e8"/></svg>
<div class="fold" style="top:279px">Drafts</div>
<svg class="a" style="left:136px;top:297px" width="17" height="17" viewBox="0 0 17 17"><path d="M1.500 8.500q0-2 2-2h2v8h-4z" fill="#b4b6ee" stroke="#33358a"/><path d="M2 15h13v-5" fill="none" stroke="#1a1a60" stroke-width="1.300"/><rect x="6.500" y="1.500" width="7" height="9" fill="#dde0fa" stroke="#223" stroke-width="1"/><path d="M8 3l4 5M12 3l-4 5" stroke="#44a" stroke-width=".9"/><path d="M3 11h11v3.500h-11z" fill="#a2a4e8"/></svg>
<div class="fold" style="top:297px">Sent</div>
<svg class="a" style="left:136px;top:315px" width="17" height="18" viewBox="0 0 17 18"><path d="M3 6l11 1-2 10h-7z" fill="#333"/><path d="M4.500 8l6 8M7 7.500l5 7M4.500 12l4 5M12.500 8l-6 8M10 7.500l-5 7" stroke="#ddd" stroke-width=".8"/><path d="M3.500 4l4-3 5 3.500-4 3.500z" fill="#f4f4f4" stroke="#444" stroke-width=".8"/><path d="M3 6.500q5 3 11 .5" fill="none" stroke="#111" stroke-width="1.200"/></svg>
<div class="fold" style="top:315px">Trash</div>
<svg class="a" style="left:136px;top:333px" width="16" height="17" viewBox="0 0 16 17"><path d="M1.500 5.500v9h12v-8h-6l-1.500-2h-3.500z" fill="#d0d2f8" stroke="#33358a" stroke-width="1"/><path d="M2.500 7.500h10v6h-10z" fill="#a8aaec"/><path d="M14 7v8h-12" fill="none" stroke="#1a1a60" stroke-width="1.200"/></svg>
<div class="fold" style="top:333px">allegro</div>
<svg class="a" style="left:136px;top:351px" width="16" height="17" viewBox="0 0 16 17"><path d="M1.500 5.500v9h12v-8h-6l-1.500-2h-3.500z" fill="#d0d2f8" stroke="#33358a" stroke-width="1"/><path d="M2.500 7.500h10v6h-10z" fill="#a8aaec"/><path d="M14 7v8h-12" fill="none" stroke="#1a1a60" stroke-width="1.200"/></svg>
<div class="fold" style="top:351px">allifpan</div>
<svg class="a" style="left:136px;top:369px" width="16" height="17" viewBox="0 0 16 17"><path d="M1.500 5.500v9h12v-8h-6l-1.500-2h-3.500z" fill="#d0d2f8" stroke="#33358a" stroke-width="1"/><path d="M2.500 7.500h10v6h-10z" fill="#a8aaec"/><path d="M14 7v8h-12" fill="none" stroke="#1a1a60" stroke-width="1.200"/></svg>
<div class="fold" style="top:369px">allifpan_...achowania</div>
<svg class="a" style="left:136px;top:387px" width="16" height="17" viewBox="0 0 16 17"><path d="M1.500 5.500v9h12v-8h-6l-1.500-2h-3.500z" fill="#d0d2f8" stroke="#33358a" stroke-width="1"/><path d="M2.500 7.500h10v6h-10z" fill="#a8aaec"/><path d="M14 7v8h-12" fill="none" stroke="#1a1a60" stroke-width="1.200"/></svg>
<div class="fold" style="top:387px">bugs</div>
<svg class="a" style="left:136px;top:405px" width="16" height="17" viewBox="0 0 16 17"><path d="M1.500 5.500v9h12v-8h-6l-1.500-2h-3.500z" fill="#d0d2f8" stroke="#33358a" stroke-width="1"/><path d="M2.500 7.500h10v6h-10z" fill="#a8aaec"/><path d="M14 7v8h-12" fill="none" stroke="#1a1a60" stroke-width="1.200"/></svg>
<div class="fold" style="top:405px">bugs_do_zachowania</div>
<svg class="a" style="left:136px;top:423px" width="16" height="17" viewBox="0 0 16 17"><path d="M1.500 5.500v9h12v-8h-6l-1.500-2h-3.500z" fill="#d0d2f8" stroke="#33358a" stroke-width="1"/><path d="M2.500 7.500h10v6h-10z" fill="#a8aaec"/><path d="M14 7v8h-12" fill="none" stroke="#1a1a60" stroke-width="1.200"/></svg>
<div class="fold" style="top:423px">bzdury</div>
<svg class="a" style="left:136px;top:441px" width="16" height="17" viewBox="0 0 16 17"><path d="M1.500 5.500v9h12v-8h-6l-1.500-2h-3.500z" fill="#d0d2f8" stroke="#33358a" stroke-width="1"/><path d="M2.500 7.500h10v6h-10z" fill="#a8aaec"/><path d="M14 7v8h-12" fill="none" stroke="#1a1a60" stroke-width="1.200"/></svg>
<div class="fold" style="top:441px">cft</div>
<svg class="a" style="left:136px;top:459px" width="16" height="17" viewBox="0 0 16 17"><path d="M1.500 5.500v9h12v-8h-6l-1.500-2h-3.500z" fill="#d0d2f8" stroke="#33358a" stroke-width="1"/><path d="M2.500 7.500h10v6h-10z" fill="#a8aaec"/><path d="M14 7v8h-12" fill="none" stroke="#1a1a60" stroke-width="1.200"/></svg>
<div class="fold" style="top:459px">computing</div>
<svg class="a" style="left:136px;top:477px" width="16" height="17" viewBox="0 0 16 17"><path d="M1.500 5.500v9h12v-8h-6l-1.500-2h-3.500z" fill="#d0d2f8" stroke="#33358a" stroke-width="1"/><path d="M2.500 7.500h10v6h-10z" fill="#a8aaec"/><path d="M14 7v8h-12" fill="none" stroke="#1a1a60" stroke-width="1.200"/></svg>
<div class="fold" style="top:477px">dietl</div>
<svg class="a" style="left:136px;top:495px" width="16" height="17" viewBox="0 0 16 17"><path d="M1.500 5.500v9h12v-8h-6l-1.500-2h-3.500z" fill="#d0d2f8" stroke="#33358a" stroke-width="1"/><path d="M2.500 7.500h10v6h-10z" fill="#a8aaec"/><path d="M14 7v8h-12" fill="none" stroke="#1a1a60" stroke-width="1.200"/></svg>
<div class="fold" style="top:495px">do_zachowania</div>
<svg class="a" style="left:136px;top:513px" width="16" height="17" viewBox="0 0 16 17"><path d="M1.500 5.500v9h12v-8h-6l-1.500-2h-3.500z" fill="#d0d2f8" stroke="#33358a" stroke-width="1"/><path d="M2.500 7.500h10v6h-10z" fill="#a8aaec"/><path d="M14 7v8h-12" fill="none" stroke="#1a1a60" stroke-width="1.200"/></svg>
<div class="fold" style="top:513px">eliza</div>
<svg class="a" style="left:136px;top:531px" width="16" height="17" viewBox="0 0 16 17"><path d="M1.500 5.500v9h12v-8h-6l-1.500-2h-3.500z" fill="#d0d2f8" stroke="#33358a" stroke-width="1"/><path d="M2.500 7.500h10v6h-10z" fill="#a8aaec"/><path d="M14 7v8h-12" fill="none" stroke="#1a1a60" stroke-width="1.200"/></svg>
<div class="fold" style="top:531px">fuw</div>
<svg class="a" style="left:136px;top:549px" width="16" height="17" viewBox="0 0 16 17"><path d="M1.500 5.500v9h12v-8h-6l-1.500-2h-3.500z" fill="#d0d2f8" stroke="#33358a" stroke-width="1"/><path d="M2.500 7.500h10v6h-10z" fill="#a8aaec"/><path d="M14 7v8h-12" fill="none" stroke="#1a1a60" stroke-width="1.200"/></svg>
<div class="fold" style="top:549px">globsol</div>
<svg class="a" style="left:136px;top:567px" width="16" height="17" viewBox="0 0 16 17"><path d="M1.500 5.500v9h12v-8h-6l-1.500-2h-3.500z" fill="#d0d2f8" stroke="#33358a" stroke-width="1"/><path d="M2.500 7.500h10v6h-10z" fill="#a8aaec"/><path d="M14 7v8h-12" fill="none" stroke="#1a1a60" stroke-width="1.200"/></svg>
<div class="fold" style="top:567px">gorzk</div>
<svg class="a" style="left:136px;top:585px" width="16" height="17" viewBox="0 0 16 17"><path d="M1.500 5.500v9h12v-8h-6l-1.500-2h-3.500z" fill="#d0d2f8" stroke="#33358a" stroke-width="1"/><path d="M2.500 7.500h10v6h-10z" fill="#a8aaec"/><path d="M14 7v8h-12" fill="none" stroke="#1a1a60" stroke-width="1.200"/></svg>
<div class="fold" style="top:585px">hpc</div>
<svg class="a" style="left:136px;top:603px" width="16" height="17" viewBox="0 0 16 17"><path d="M1.500 5.500v9h12v-8h-6l-1.500-2h-3.500z" fill="#d0d2f8" stroke="#33358a" stroke-width="1"/><path d="M2.500 7.500h10v6h-10z" fill="#a8aaec"/><path d="M14 7v8h-12" fill="none" stroke="#1a1a60" stroke-width="1.200"/></svg>
<div class="fold" style="top:603px">InMnAs_QW</div>
<svg class="a" style="left:136px;top:621px" width="16" height="17" viewBox="0 0 16 17"><path d="M1.500 5.500v9h12v-8h-6l-1.500-2h-3.500z" fill="#d0d2f8" stroke="#33358a" stroke-width="1"/><path d="M2.500 7.500h10v6h-10z" fill="#a8aaec"/><path d="M14 7v8h-12" fill="none" stroke="#1a1a60" stroke-width="1.200"/></svg>
<div class="fold" style="top:621px">inni</div>
<svg class="a" style="left:136px;top:639px" width="16" height="17" viewBox="0 0 16 17"><path d="M1.500 5.500v9h12v-8h-6l-1.500-2h-3.500z" fill="#d0d2f8" stroke="#33358a" stroke-width="1"/><path d="M2.500 7.500h10v6h-10z" fill="#a8aaec"/><path d="M14 7v8h-12" fill="none" stroke="#1a1a60" stroke-width="1.200"/></svg>
<div class="fold" style="top:639px">inni_wurstbauer</div>
<svg class="a" style="left:136px;top:657px" width="16" height="17" viewBox="0 0 16 17"><path d="M1.500 5.500v9h12v-8h-6l-1.500-2h-3.500z" fill="#d0d2f8" stroke="#33358a" stroke-width="1"/><path d="M2.500 7.500h10v6h-10z" fill="#a8aaec"/><path d="M14 7v8h-12" fill="none" stroke="#1a1a60" stroke-width="1.200"/></svg>
<div class="fold" style="top:657px">instytut</div>
<svg class="a" style="left:136px;top:675px" width="16" height="17" viewBox="0 0 16 17"><path d="M1.500 5.500v9h12v-8h-6l-1.500-2h-3.500z" fill="#d0d2f8" stroke="#33358a" stroke-width="1"/><path d="M2.500 7.500h10v6h-10z" fill="#a8aaec"/><path d="M14 7v8h-12" fill="none" stroke="#1a1a60" stroke-width="1.200"/></svg>
<div class="fold" style="top:675px">irmc</div>
<svg class="a" style="left:136px;top:693px" width="16" height="17" viewBox="0 0 16 17"><path d="M1.500 5.500v9h12v-8h-6l-1.500-2h-3.500z" fill="#d0d2f8" stroke="#33358a" stroke-width="1"/><path d="M2.500 7.500h10v6h-10z" fill="#a8aaec"/><path d="M14 7v8h-12" fill="none" stroke="#1a1a60" stroke-width="1.200"/></svg>
<div class="fold" style="top:693px">isia</div>
<svg class="a" style="left:136px;top:711px" width="16" height="17" viewBox="0 0 16 17"><path d="M1.500 5.500v9h12v-8h-6l-1.500-2h-3.500z" fill="#d0d2f8" stroke="#33358a" stroke-width="1"/><path d="M2.500 7.500h10v6h-10z" fill="#a8aaec"/><path d="M14 7v8h-12" fill="none" stroke="#1a1a60" stroke-width="1.200"/></svg>
<div class="fold" style="top:711px">journalspam</div>
<svg class="a" style="left:136px;top:729px" width="16" height="17" viewBox="0 0 16 17"><path d="M1.500 5.500v9h12v-8h-6l-1.500-2h-3.500z" fill="#d0d2f8" stroke="#33358a" stroke-width="1"/><path d="M2.500 7.500h10v6h-10z" fill="#a8aaec"/><path d="M14 7v8h-12" fill="none" stroke="#1a1a60" stroke-width="1.200"/></svg>
<div class="fold" style="top:729px">kdm</div>
<svg class="a" style="left:136px;top:747px" width="16" height="17" viewBox="0 0 16 17"><path d="M1.500 5.500v9h12v-8h-6l-1.500-2h-3.500z" fill="#d0d2f8" stroke="#33358a" stroke-width="1"/><path d="M2.500 7.500h10v6h-10z" fill="#a8aaec"/><path d="M14 7v8h-12" fill="none" stroke="#1a1a60" stroke-width="1.200"/></svg>
<div class="fold" style="top:747px">khazen</div>
<svg class="a" style="left:136px;top:765px" width="16" height="17" viewBox="0 0 16 17"><path d="M1.500 5.500v9h12v-8h-6l-1.500-2h-3.500z" fill="#d0d2f8" stroke="#33358a" stroke-width="1"/><path d="M2.500 7.500h10v6h-10z" fill="#a8aaec"/><path d="M14 7v8h-12" fill="none" stroke="#1a1a60" stroke-width="1.200"/></svg>
<div class="fold" style="top:765px">klaster</div>
<svg class="a" style="left:136px;top:783px" width="16" height="17" viewBox="0 0 16 17"><path d="M1.500 5.500v9h12v-8h-6l-1.500-2h-3.500z" fill="#d0d2f8" stroke="#33358a" stroke-width="1"/><path d="M2.500 7.500h10v6h-10z" fill="#a8aaec"/><path d="M14 7v8h-12" fill="none" stroke="#1a1a60" stroke-width="1.200"/></svg>
<div class="fold" style="top:783px">klimatyzacja</div>
<svg class="a" style="left:136px;top:801px" width="16" height="17" viewBox="0 0 16 17"><path d="M1.500 5.500v9h12v-8h-6l-1.500-2h-3.500z" fill="#d0d2f8" stroke="#33358a" stroke-width="1"/><path d="M2.500 7.500h10v6h-10z" fill="#a8aaec"/><path d="M14 7v8h-12" fill="none" stroke="#1a1a60" stroke-width="1.200"/></svg>
<div class="fold" style="top:801px">konferencje</div>
<svg class="a" style="left:136px;top:819px" width="16" height="17" viewBox="0 0 16 17"><path d="M1.500 5.500v9h12v-8h-6l-1.500-2h-3.500z" fill="#d0d2f8" stroke="#33358a" stroke-width="1"/><path d="M2.500 7.500h10v6h-10z" fill="#a8aaec"/><path d="M14 7v8h-12" fill="none" stroke="#1a1a60" stroke-width="1.200"/></svg>
<div class="fold" style="top:819px">license</div>
<svg class="a" style="left:136px;top:837px" width="16" height="17" viewBox="0 0 16 17"><path d="M1.500 5.500v9h12v-8h-6l-1.500-2h-3.500z" fill="#d0d2f8" stroke="#33358a" stroke-width="1"/><path d="M2.500 7.500h10v6h-10z" fill="#a8aaec"/><path d="M14 7v8h-12" fill="none" stroke="#1a1a60" stroke-width="1.200"/></svg>
<div class="fold" style="top:837px">license_demos</div>
<svg class="a" style="left:136px;top:855px" width="16" height="17" viewBox="0 0 16 17"><path d="M1.500 5.500v9h12v-8h-6l-1.500-2h-3.500z" fill="#d0d2f8" stroke="#33358a" stroke-width="1"/><path d="M2.500 7.500h10v6h-10z" fill="#a8aaec"/><path d="M14 7v8h-12" fill="none" stroke="#1a1a60" stroke-width="1.200"/></svg>
<div class="fold" style="top:855px">linked</div>
<svg class="a" style="left:136px;top:873px" width="16" height="17" viewBox="0 0 16 17"><path d="M1.500 5.500v9h12v-8h-6l-1.500-2h-3.500z" fill="#d0d2f8" stroke="#33358a" stroke-width="1"/><path d="M2.500 7.500h10v6h-10z" fill="#a8aaec"/><path d="M14 7v8h-12" fill="none" stroke="#1a1a60" stroke-width="1.200"/></svg>
<div class="fold" style="top:873px">lowtem</div>
<svg class="a" style="left:136px;top:891px" width="16" height="17" viewBox="0 0 16 17"><path d="M1.500 5.500v9h12v-8h-6l-1.500-2h-3.500z" fill="#d0d2f8" stroke="#33358a" stroke-width="1"/><path d="M2.500 7.500h10v6h-10z" fill="#a8aaec"/><path d="M14 7v8h-12" fill="none" stroke="#1a1a60" stroke-width="1.200"/></svg>
<div class="fold" style="top:891px">mathwire</div>
<div class="a" style="left:303px;top:221px;width:7px;height:692px;background:linear-gradient(90deg,#b4b2af,#e0dfde 1.500px,#f6f6f6 3px,#f6f6f6)"></div>
<svg class="a" style="left:303px;top:514px" width="6" height="110" viewBox="0 0 6 110"><path d="M4.500 2v6l-3-3zM4.500 104v6l-3-3z" fill="#2a38a8"/><path d="M3.500 10v92" stroke="#4a58c0" stroke-width="1" stroke-dasharray="1 2"/></svg>
<!-- right pane: search bar -->
<div class="a" style="left:310px;top:222px;width:1px;height:258px;background:#000"></div>
<div class="a" style="left:311px;top:222px;width:1px;height:35px;background:#fff"></div>
<div class="a" style="left:311px;top:256px;width:880px;height:1px;background:#b0aeab"></div>

<div class="t" style="left:316px;top:232px">View:</div>
<div class="a" style="left:359px;top:226px;width:182px;height:26px;border:1px solid #8e8c89;border-radius:4px;background:linear-gradient(#fdfdfd,#f4f4f4 50%,#e0dfde)"></div>
<div class="t" style="left:366px;top:232px">All</div>
<div class="a" style="left:521px;top:229px;width:17px;height:20px;border:1px solid #8e8c89;border-radius:3px;background:linear-gradient(#fff,#e4e3e2)"></div>
<svg class="a" style="left:525px;top:235px" width="10" height="8" viewBox="0 0 10 8"><path d="M1 1.500l4 4 4-4" fill="none" stroke="#111" stroke-width="1.600"/></svg>
<div class="t" style="left:552px;top:232px"><u>S</u>ubject or Sender contains:</div>
<div class="a" style="left:722px;top:227px;width:371px;height:24px;border:1px solid #6e6c69;border-radius:4px;background:#fff;box-shadow:inset 0 1px 1px #bbb"></div>
<div class="a" style="left:1103px;top:223px;width:82px;height:31px;border:1px solid #b8b6b3;border-radius:4px;background:linear-gradient(#f8f8f8,#e6e5e4)"></div>
<div class="t" style="left:1103px;width:82px;top:232px;text-align:center;color:#a8a6a3"><u>C</u>lear</div>
<div class="a" style="left:312px;top:257px;width:24px;height:22px;background:#ecebea;border-top:1px solid #fff;border-left:1px solid #fff;border-right:1px solid #000;border-bottom:2px solid #000"></div>
<div class="a" style="left:336px;top:257px;width:341px;height:22px;background:#ecebea;border-top:1px solid #fff;border-left:1px solid #fff;border-right:1px solid #000;border-bottom:2px solid #000"></div>
<div class="t" style="left:343px;top:260px">Subject</div>
<div class="a" style="left:678px;top:257px;width:20px;height:22px;background:#ecebea;border-top:1px solid #fff;border-left:1px solid #fff;border-right:1px solid #000;border-bottom:2px solid #000"></div>
<div class="a" style="left:699px;top:257px;width:219px;height:22px;background:#ecebea;border-top:1px solid #fff;border-left:1px solid #fff;border-right:1px solid #000;border-bottom:2px solid #000"></div>
<div class="t" style="left:706px;top:260px">Sender</div>
<div class="a" style="left:919px;top:257px;width:20px;height:22px;background:#ecebea;border-top:1px solid #fff;border-left:1px solid #fff;border-right:1px solid #000;border-bottom:2px solid #000"></div>
<div class="a" style="left:940px;top:257px;width:129px;height:22px;background:#ecebea;border-top:1px solid #fff;border-left:1px solid #fff;border-right:1px solid #000;border-bottom:2px solid #000"></div>
<div class="t" style="left:949px;top:260px">Date</div>
<div class="a" style="left:1070px;top:257px;width:99px;height:22px;background:#ecebea;border-top:1px solid #fff;border-left:1px solid #fff;border-right:1px solid #000;border-bottom:2px solid #000"></div>
<div class="t" style="left:1076px;top:260px">Priority</div>
<div class="a" style="left:1170px;top:257px;width:21px;height:22px;background:#ecebea;border-top:1px solid #fff;border-left:1px solid #fff;border-right:1px solid #000;border-bottom:2px solid #000"></div>
<svg class="a" style="left:317px;top:261px" width="14" height="14" viewBox="0 0 14 14"><path d="M1.500 2.500h10v7h-3l2 3-5-3h-4z" fill="#f4f0b8" stroke="#4a4ac8" stroke-width="1.200"/><path d="M4 5h5M4 7.500h3" stroke="#2a8a6a" stroke-width="1"/></svg>
<svg class="a" style="left:683px;top:263px" width="10" height="10" viewBox="0 0 10 10"><path d="M5 .500l4.500 4.500-4.500 4.500-4.500-4.500z" fill="#18a038" stroke="#053" stroke-width=".8"/><path d="M5 2l-3 3h3z" fill="#9e9"/></svg>
<svg class="a" style="left:920px;top:259px" width="16" height="16" viewBox="0 0 16 16"><rect x=".5" y=".5" width="15" height="15" rx="2" fill="#3a3ad0" stroke="#22228a"/><circle cx="8" cy="8" r="5.500" fill="#fff"/><circle cx="8" cy="8" r="2" fill="#3a3ad0"/><path d="M8 2.500v11M3.200 5.200l9.600 5.600M3.200 10.800l9.600-5.600" stroke="#3a3ad0" stroke-width="1.400"/></svg>
<svg class="a" style="left:1174px;top:262px" width="12" height="12" viewBox="0 0 12 12"><path d="M1.500 1.500h9v7h-9zM1.500 4.500h9M5.500 1.500v7" fill="none" stroke="#222" stroke-width="1"/><path d="M6 8h6l-3 3.500z" fill="#000" stroke="#ecebea" stroke-width=".6"/></svg>
<div class="a" style="left:311px;top:279px;width:880px;height:193px;background:#fff;border-left:2px solid #000;border-bottom:1px solid #000;border-right:1px solid #000;overflow:hidden" id="thr">
<svg class="a" style="left:27px;top:5px" width="16" height="10" viewBox="0 0 16 10"><rect x=".5" y=".5" width="13" height="8" fill="#fff" stroke="#5a5acc" stroke-width="1"/><path d="M3 3.500h6M3 5.500h5" stroke="#5a5acc" stroke-width="1"/><rect x="10.500" y="2.500" width="1.500" height="1.500" fill="#5a5acc"/></svg>
<div class="row" style="left:44px;top:0px;">Re: Postdocy</div>
<div class="a" style="left:373px;top:7px;width:4px;height:4px;border-radius:2px;background:#c8c8c8;border:1px solid #8c8c8c"></div>
<div class="row" style="left:389px;top:0px;">Rowicka-Kudlicka, Malgorzata E.</div>
<div class="a" style="left:613px;top:7px;width:4px;height:4px;border-radius:2px;background:#c8c8c8;border:1px solid #8c8c8c"></div>
<div class="row" style="left:631px;top:0px;">01/17/2009 01:16 ...</div>
<div class="row" style="left:759px;top:0px;"></div>
<svg class="a" style="left:27px;top:23px" width="16" height="10" viewBox="0 0 16 10"><rect x=".5" y=".5" width="13" height="8" fill="#fff" stroke="#5a5acc" stroke-width="1"/><path d="M3 3.500h6M3 5.500h5" stroke="#5a5acc" stroke-width="1"/><rect x="10.500" y="2.500" width="1.500" height="1.500" fill="#5a5acc"/></svg>
<div class="row" style="left:44px;top:18px;">Re: ifpan serwer fujitsu v2</div>
<div class="a" style="left:373px;top:25px;width:4px;height:4px;border-radius:2px;background:#c8c8c8;border:1px solid #8c8c8c"></div>
<div class="row" style="left:389px;top:18px;">Maciek Sawicki</div>
<div class="a" style="left:613px;top:25px;width:4px;height:4px;border-radius:2px;background:#c8c8c8;border:1px solid #8c8c8c"></div>
<div class="row" style="left:631px;top:18px;">01/19/2009 10:02 ...</div>
<div class="row" style="left:759px;top:18px;"></div>
<svg class="a" style="left:27px;top:41px" width="16" height="10" viewBox="0 0 16 10"><rect x=".5" y=".5" width="13" height="8" fill="#fff" stroke="#5a5acc" stroke-width="1"/><path d="M3 3.500h6M3 5.500h5" stroke="#5a5acc" stroke-width="1"/><rect x="10.500" y="2.500" width="1.500" height="1.500" fill="#5a5acc"/></svg>
<div class="row" style="left:44px;top:36px;">Re: ifpan serwer fujitsu v2</div>
<div class="a" style="left:373px;top:43px;width:4px;height:4px;border-radius:2px;background:#c8c8c8;border:1px solid #8c8c8c"></div>
<div class="row" style="left:389px;top:36px;">Piotr Kohman</div>
<div class="a" style="left:613px;top:43px;width:4px;height:4px;border-radius:2px;background:#c8c8c8;border:1px solid #8c8c8c"></div>
<div class="row" style="left:631px;top:36px;">01/19/2009 10:07 ...</div>
<div class="row" style="left:759px;top:36px;"></div>
<svg class="a" style="left:27px;top:59px" width="16" height="10" viewBox="0 0 16 10"><rect x=".5" y=".5" width="13" height="8" fill="#fff" stroke="#5a5acc" stroke-width="1"/><path d="M3 3.500h6M3 5.500h5" stroke="#5a5acc" stroke-width="1"/><rect x="10.500" y="2.500" width="1.500" height="1.500" fill="#5a5acc"/></svg>
<div class="row" style="left:44px;top:54px;">zobacz sam ...</div>
<div class="a" style="left:373px;top:61px;width:4px;height:4px;border-radius:2px;background:#c8c8c8;border:1px solid #8c8c8c"></div>
<div class="row" style="left:389px;top:54px;">Weronika Sliwa</div>
<div class="a" style="left:613px;top:61px;width:4px;height:4px;border-radius:2px;background:#c8c8c8;border:1px solid #8c8c8c"></div>
<div class="row" style="left:631px;top:54px;">01/19/2009 11:50 ...</div>
<div class="row" style="left:759px;top:54px;"></div>
<svg class="a" style="left:26px;top:75px" width="17" height="12" viewBox="0 0 17 12"><path d="M3.500 4.500h11v7h-13v-5z" fill="#fff" stroke="#5a5acc" stroke-width="1"/><path d="M5 7h5M5 9h5" stroke="#5a5acc" stroke-width=".9"/><path d="M2 8l6-6.500q2-1.500 3.500 0t0 3l-5 5" fill="none" stroke="#3a3ab8" stroke-width="1"/></svg>
<div class="row b" style="left:44px;top:72px;">Fw: Prośba o rozpowszechnienie informacji o of...</div>
<svg class="a" style="left:371px;top:77px" width="9" height="9" viewBox="0 0 9 9"><path d="M4.500 .500l4 4-4 4-4-4z" fill="#18a038" stroke="#053" stroke-width=".8"/><path d="M4.500 2l-2.500 2.500h2.500z" fill="#9e9"/></svg>
<div class="row b" style="left:389px;top:72px;">Dyrektor</div>
<div class="a" style="left:613px;top:79px;width:4px;height:4px;border-radius:2px;background:#c8c8c8;border:1px solid #8c8c8c"></div>
<div class="row b" style="left:631px;top:72px;">01/19/2009 02:23 ...</div>
<div class="row b" style="left:759px;top:72px;">Highest</div>
<svg class="a" style="left:27px;top:95px" width="16" height="10" viewBox="0 0 16 10"><rect x=".5" y=".5" width="13" height="8" fill="#fff" stroke="#5a5acc" stroke-width="1"/><path d="M3 3.500h6M3 5.500h5" stroke="#5a5acc" stroke-width="1"/><rect x="10.500" y="2.500" width="1.500" height="1.500" fill="#5a5acc"/></svg>
<div class="row b" style="left:44px;top:90px;">Fw: [KPK] Zaproszenie na szkolenie o 7PR dla n...</div>
<svg class="a" style="left:371px;top:95px" width="9" height="9" viewBox="0 0 9 9"><path d="M4.500 .500l4 4-4 4-4-4z" fill="#18a038" stroke="#053" stroke-width=".8"/><path d="M4.500 2l-2.500 2.500h2.500z" fill="#9e9"/></svg>
<div class="row b" style="left:389px;top:90px;">Projects at IoP PAS</div>
<div class="a" style="left:613px;top:97px;width:4px;height:4px;border-radius:2px;background:#c8c8c8;border:1px solid #8c8c8c"></div>
<div class="row b" style="left:631px;top:90px;">01/19/2009 03:05 ...</div>
<div class="row b" style="left:759px;top:90px;">Normal</div>
<svg class="a" style="left:27px;top:113px" width="16" height="10" viewBox="0 0 16 10"><rect x=".5" y=".5" width="13" height="8" fill="#fff" stroke="#5a5acc" stroke-width="1"/><path d="M3 3.500h6M3 5.500h5" stroke="#5a5acc" stroke-width="1"/><rect x="10.500" y="2.500" width="1.500" height="1.500" fill="#5a5acc"/></svg>
<div class="row b" style="left:44px;top:108px;">Wyniki 36 konkursu MNiSW</div>
<svg class="a" style="left:371px;top:113px" width="9" height="9" viewBox="0 0 9 9"><path d="M4.500 .500l4 4-4 4-4-4z" fill="#18a038" stroke="#053" stroke-width=".8"/><path d="M4.500 2l-2.500 2.500h2.500z" fill="#9e9"/></svg>
<div class="row b" style="left:389px;top:108px;">Maciej Rabanowski</div>
<div class="a" style="left:613px;top:115px;width:4px;height:4px;border-radius:2px;background:#c8c8c8;border:1px solid #8c8c8c"></div>
<div class="row b" style="left:631px;top:108px;">01/20/2009 11:50 ...</div>
<div class="row b" style="left:759px;top:108px;">Normal</div>
<div class="a" style="left:0;top:126px;width:863px;height:18px;background:#7a9ed8;outline:1px dotted #c8d8f0;outline-offset:-1px"></div>
<svg class="a" style="left:27px;top:131px" width="16" height="10" viewBox="0 0 16 10"><rect x=".5" y=".5" width="13" height="8" fill="#7a9ed8" stroke="#fff" stroke-width="1"/><path d="M3 3.500h6M3 5.500h5" stroke="#fff" stroke-width="1"/><rect x="10.500" y="2.500" width="1.500" height="1.500" fill="#fff"/></svg>
<div class="row" style="left:44px;top:126px;color:#fff;">[Fwd: Nature physics manuscript]</div>
<div class="a" style="left:373px;top:133px;width:4px;height:4px;border-radius:2px;background:#c8c8c8;border:1px solid #8c8c8c"></div>
<div class="row" style="left:389px;top:126px;color:#fff;">Tomasz Dietl</div>
<div class="a" style="left:613px;top:133px;width:4px;height:4px;border-radius:2px;background:#c8c8c8;border:1px solid #8c8c8c"></div>
<div class="row" style="left:631px;top:126px;color:#fff;">01/26/2009 04:54 ...</div>
<div class="row" style="left:759px;top:126px;color:#fff;">Normal</div>
<svg class="a" style="left:27px;top:149px" width="16" height="10" viewBox="0 0 16 10"><rect x=".5" y=".5" width="13" height="8" fill="#fff" stroke="#5a5acc" stroke-width="1"/><path d="M3 3.500h6M3 5.500h5" stroke="#5a5acc" stroke-width="1"/><rect x="10.500" y="2.500" width="1.500" height="1.500" fill="#5a5acc"/></svg>
<div class="row" style="left:44px;top:144px;">Re: sesja</div>
<div class="a" style="left:373px;top:151px;width:4px;height:4px;border-radius:2px;background:#c8c8c8;border:1px solid #8c8c8c"></div>
<div class="row" style="left:389px;top:144px;">Bartek Chojnacki</div>
<div class="a" style="left:613px;top:151px;width:4px;height:4px;border-radius:2px;background:#c8c8c8;border:1px solid #8c8c8c"></div>
<div class="row" style="left:631px;top:144px;">01/27/2009 04:15 ...</div>
<div class="row" style="left:759px;top:144px;">Normal</div>
<svg class="a" style="left:26px;top:165px" width="17" height="12" viewBox="0 0 17 12"><path d="M3.500 4.500h11v7h-13v-5z" fill="#fff" stroke="#5a5acc" stroke-width="1"/><path d="M5 7h5M5 9h5" stroke="#5a5acc" stroke-width=".9"/><path d="M2 8l6-6.500q2-1.500 3.500 0t0 3l-5 5" fill="none" stroke="#3a3ab8" stroke-width="1"/></svg>
<div class="row" style="left:44px;top:162px;">[Fwd: Re: Nature physics manuscript]</div>
<div class="a" style="left:373px;top:169px;width:4px;height:4px;border-radius:2px;background:#c8c8c8;border:1px solid #8c8c8c"></div>
<div class="row" style="left:389px;top:162px;">Tomasz Dietl</div>
<div class="a" style="left:613px;top:169px;width:4px;height:4px;border-radius:2px;background:#c8c8c8;border:1px solid #8c8c8c"></div>
<div class="row" style="left:631px;top:162px;">01/27/2009 06:19 ...</div>
<div class="row" style="left:759px;top:162px;">Normal</div>
<svg class="a" style="left:27px;top:185px" width="16" height="10" viewBox="0 0 16 10"><rect x=".5" y=".5" width="13" height="8" fill="#fff" stroke="#5a5acc" stroke-width="1"/><path d="M3 3.500h6M3 5.500h5" stroke="#5a5acc" stroke-width="1"/><rect x="10.500" y="2.500" width="1.500" height="1.500" fill="#5a5acc"/></svg>
<div class="row b" style="left:44px;top:180px;">dysk</div>
<svg class="a" style="left:371px;top:185px" width="9" height="9" viewBox="0 0 9 9"><path d="M4.500 .500l4 4-4 4-4-4z" fill="#18a038" stroke="#053" stroke-width=".8"/><path d="M4.500 2l-2.500 2.500h2.500z" fill="#9e9"/></svg>
<div class="row b" style="left:389px;top:180px;">Weronika Sliwa</div>
<div class="a" style="left:613px;top:187px;width:4px;height:4px;border-radius:2px;background:#c8c8c8;border:1px solid #8c8c8c"></div>
<div class="row b" style="left:631px;top:180px;">01/30/2009 09:40 ...</div>
<div class="row b" style="left:759px;top:180px;"></div>
</div>
<div class="a" style="left:1176px;top:279px;width:14px;height:192px;background:#cfcecd"></div>
<div class="a" style="left:1176px;top:279px;width:14px;height:14px;background:linear-gradient(90deg,#fff,#e2e1e0);border:1px solid #9a9896"></div>
<svg class="a" style="left:1179px;top:283px" width="8" height="6" viewBox="0 0 8 6"><path d="M1 4.500l3-3 3 3" fill="none" stroke="#222" stroke-width="1.500"/></svg>
<div class="a" style="left:1176px;top:457px;width:14px;height:14px;background:linear-gradient(90deg,#fff,#e2e1e0);border:1px solid #9a9896"></div>
<svg class="a" style="left:1179px;top:461px" width="8" height="6" viewBox="0 0 8 6"><path d="M1 1.500l3 3 3-3" fill="none" stroke="#222" stroke-width="1.500"/></svg>
<div class="a" style="left:1176px;top:425px;width:14px;height:27px;background:linear-gradient(90deg,#a5c1ee,#86aae2 60%,#7a9fdb);border:1px solid #6a8cc8"></div>
<svg class="a" style="left:1179px;top:435px" width="8" height="7" viewBox="0 0 8 7"><path d="M1 1h6M1 3.500h6M1 6h6" stroke="#4a6cb0" stroke-width="1"/></svg>
<div class="a" style="left:311px;top:472px;width:880px;height:2px;background:#fff"></div><svg class="a" style="left:692px;top:474px" width="116" height="6" viewBox="0 0 116 6"><path d="M.5 0v6M114.500 0v6" stroke="#aaa8a5" stroke-width="1"/><path d="M5 1.500h6l-3 3zM107 1.500h6l-3 3z" fill="#2a3088"/><path d="M14 3.500h90" stroke="#3a48b0" stroke-width="1" stroke-dasharray="1 2"/></svg>
<!-- message header -->
<div class="a" style="left:310px;top:480px;width:881px;height:86px;background:#ecebea;border-top:1px solid #000;border-left:1px solid #000;border-bottom:1px solid #000;box-shadow:inset 0 -1px 0 #fff"></div>
<div class="a" style="left:318px;top:483px;width:9px;height:9px;border:1px solid #777;background:#fff"></div><div class="a" style="left:320px;top:487px;width:5px;height:1px;background:#000"></div>
<div class="t b" style="left:330px;width:73px;top:482px;text-align:right">Subject:</div>
<div class="t b" style="left:330px;width:73px;top:503px;text-align:right">From:</div>
<div class="t b" style="left:330px;width:73px;top:524px;text-align:right">Date:</div>
<div class="t b" style="left:330px;width:73px;top:545px;text-align:right">To:</div>
<div class="t b" style="left:414px;top:482px">[Fwd: Nature physics manuscript]</div>
<div class="t lnk" style="left:414px;top:503px">Tomasz Dietl &lt;dietl@ifpan.edu.pl&gt;</div>
<div class="t" style="left:414px;top:524px">01/26/2009 04:54 PM</div>
<div class="t lnk" style="left:414px;top:545px">Sliwa@ifpan.edu.pl</div>
<!-- message body -->
<div class="a" style="left:310px;top:566px;width:881px;height:347px;background:#fff;border-left:1px solid #000;overflow:hidden" id="body"></div>
<div class="a" style="left:320px;top:661px;width:384px;height:1px;background:#000"></div>
<div class="mono" style="top:663px">Tomasz DIETL</div>
<div class="mono" style="top:680px">Laboratory for Cryogenic and Spintronic Research</div>
<div class="mono" style="top:697px">Institute of Physics, Polish Academy of Sciences</div>
<div class="mono" style="top:714px">al. Lotnikow 32/46, PL 02-668 Warszawa, POLAND</div>
<div class="mono lnk" style="top:731px">dietl@ifpan.edu.pl</div>
<div class="mono lnk" style="top:748px">www.ifpan.edu.pl/sdvs/en/sl2.html</div>
<div class="mono lnk" style="top:765px">www.ifpan.edu.pl/~dietl</div>
<div class="mono" style="top:782px">phone: +48.22.843-5324, +48.22.424-5434 (home)</div>
<div class="mono" style="top:799px;height:13px;overflow:hidden">fax: +48.22.847-5224; +48.22.843-0926</div>
<div class="a" style="left:312px;top:812px;width:864px;height:2px;background:linear-gradient(#777,#aaa)"></div>
<div class="mono" style="top:833px">also (part time) at:</div>
<div class="mono" style="top:850px">Chair of Condensed Matter Physics</div>
<div class="mono" style="top:867px">Institute of Theoretical Physics</div>
<div class="mono" style="top:884px">Faculty of Physics, University of Warsaw</div>
<div class="mono lnk" style="top:901px;height:12px;overflow:hidden">www.fuw.edu.pl</div>
<div class="a" style="left:1176px;top:566px;width:14px;height:347px;background:#cfcecd"></div>
<div class="a" style="left:1176px;top:567px;width:14px;height:14px;background:linear-gradient(90deg,#fff,#e2e1e0);border:1px solid #9a9896"></div>
<svg class="a" style="left:1179px;top:571px" width="8" height="6" viewBox="0 0 8 6"><path d="M1 4.500l3-3 3 3" fill="none" stroke="#222" stroke-width="1.500"/></svg>
<div class="a" style="left:1176px;top:898px;width:14px;height:14px;background:linear-gradient(90deg,#fff,#e2e1e0);border:1px solid #9a9896"></div>
<svg class="a" style="left:1179px;top:902px" width="8" height="6" viewBox="0 0 8 6"><path d="M1 1.500l3 3 3-3" fill="none" stroke="#222" stroke-width="1.500"/></svg>
<div class="a" style="left:1176px;top:756px;width:14px;height:125px;background:linear-gradient(90deg,#a5c1ee,#86aae2 60%,#7a9fdb);border:1px solid #6a8cc8"></div>
<svg class="a" style="left:1179px;top:814px" width="8" height="7" viewBox="0 0 8 7"><path d="M1 1h6M1 3.500h6M1 6h6" stroke="#4a6cb0" stroke-width="1"/></svg>
<!-- status bar -->
<div class="a" style="left:105px;top:913px;width:1086px;height:1px;background:#b0aeab"></div>
<div class="a" style="left:105px;top:915px;width:158px;height:27px;border-top:1px solid #a8a6a3;border-left:1px solid #a8a6a3;border-bottom:1px solid #fff;border-right:1px solid #fff"></div>
<div class="a" style="left:265px;top:915px;width:721px;height:27px;border-top:1px solid #a8a6a3;border-left:1px solid #a8a6a3;border-bottom:1px solid #fff;border-right:1px solid #fff"></div>
<div class="a" style="left:988px;top:915px;width:90px;height:27px;border-top:1px solid #a8a6a3;border-left:1px solid #a8a6a3;border-bottom:1px solid #fff;border-right:1px solid #fff"></div>
<div class="a" style="left:1080px;top:915px;width:78px;height:27px;border-top:1px solid #a8a6a3;border-left:1px solid #a8a6a3;border-bottom:1px solid #fff;border-right:1px solid #fff"></div>
<div class="a" style="left:1160px;top:915px;width:30px;height:27px;border-top:1px solid #a8a6a3;border-left:1px solid #a8a6a3;border-bottom:1px solid #fff;border-right:1px solid #fff"></div>
<div class="t" style="left:998px;top:921px">Unread: 162</div>
<div class="t" style="left:1091px;top:921px">Total: 430</div>
<svg class="a" style="left:114px;top:918px" width="140" height="20" viewBox="0 0 140 20">
<g stroke="#e8d820" stroke-width="1.400"><path d="M12 2v16M4 10h16M6.300 4.300l11.400 11.400M17.700 4.300l-11.400 11.400"/></g><circle cx="12" cy="10" r="4" fill="none" stroke="#333" stroke-width="1"/><path d="M3 10h3M18 10h3M12 2v2M12 16v2" stroke="#222" stroke-width="1"/><path d="M14 13l9-1-3 4h-8z" fill="#8a90e0"/>
<path d="M41 2h4v4h2.500l-4.500 5-4.500-5h2.500z" fill="#18a838"/><rect x="50.500" y="5.500" width="10" height="7" fill="#fff" stroke="#c22" stroke-width="1" stroke-dasharray="1.500 1.500"/><rect x="54" y="8" width="2" height="2" fill="#22c"/><path d="M45 13h15l3-2v4l-3 2h-15z" fill="#3a3ab8"/><path d="M60 13l3-2v4l-3 2z" fill="#111"/>
<path d="M80 8l14-5 5 9-12 5z" fill="#ece8a0"/><path d="M82 11l10 3M81 9l10 3" stroke="#c8c070" stroke-width="1"/><path d="M99 3l-13 12" stroke="#111" stroke-width="2.800" stroke-linecap="round"/><path d="M98 3.500l-11 10" stroke="#2a9a6a" stroke-width=".9"/><path d="M86 15l-3 2.500" stroke="#c22" stroke-width="1.800"/><path d="M90 16l10-3" stroke="#7a80e0" stroke-width="1.500"/>
<rect x="116.500" y="5.500" width="15" height="10" rx="1" fill="#eef" stroke="#223070" stroke-width="1.300"/><path d="M118.500 8.500h4M118.500 10.500h4M118.500 12.500h4" stroke="#223070" stroke-width="1"/><circle cx="127" cy="9" r="1.800" fill="#223070"/><path d="M124 14.500q3-5 6 0z" fill="#223070"/><rect x="118" y="3.500" width="4" height="2" fill="#33a"/><rect x="126" y="3.500" width="4" height="2" fill="#c22"/>
</svg>
<svg class="a" style="left:1162px;top:922px" width="27" height="14" viewBox="0 0 27 14"><path d="M0 7h9M17 7h10" stroke="#3a3ad8" stroke-width="1.600"/><rect x="9.500" y="2.500" width="5" height="9" rx="2" fill="#8a90ea" stroke="#3a3ad8"/><rect x="13.500" y="3.500" width="4" height="7" rx="1.500" fill="#a8acf0" stroke="#3a3ad8"/><path d="M12 2v10" stroke="#11c" stroke-width="1"/></svg>


</body></html>
